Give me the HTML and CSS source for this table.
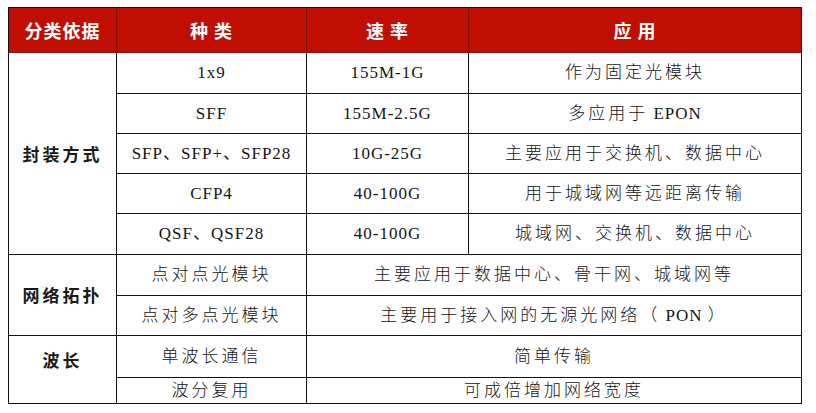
FILE: index.html
```html
<!DOCTYPE html>
<html lang="zh">
<head>
<meta charset="utf-8">
<link rel="stylesheet" href="styles.css">
</head>
<body>
<table class="grid">
  <colgroup>
    <col class="c1"><col class="c2"><col class="c3"><col class="c4">
  </colgroup>
  <thead>
    <tr class="h">
      <th>分类依据</th>
      <th>种&nbsp;类</th>
      <th>速&nbsp;率</th>
      <th>应&nbsp;用</th>
    </tr>
  </thead>
  <tbody>
    <tr class="r41">
      <td class="cat" rowspan="5">封装方式</td>
      <td class="lat">1x9</td>
      <td class="lat">155M-1G</td>
      <td class="cjk">作为固定光模块</td>
    </tr>
    <tr class="r40">
      <td class="lat">SFF</td>
      <td class="lat">155M-2.5G</td>
      <td class="cjk">多应用于<span class="lat"> EPON</span></td>
    </tr>
    <tr class="r40">
      <td class="lat">SFP、SFP+、SFP28</td>
      <td class="lat">10G-25G</td>
      <td class="cjk">主要应用于交换机、数据中心</td>
    </tr>
    <tr class="r40">
      <td class="lat">CFP4</td>
      <td class="lat">40-100G</td>
      <td class="cjk">用于城域网等远距离传输</td>
    </tr>
    <tr class="r41">
      <td class="lat">QSF、QSF28</td>
      <td class="lat">40-100G</td>
      <td class="cjk">城域网、交换机、数据中心</td>
    </tr>
    <tr class="r41">
      <td class="cat" rowspan="2">网络拓扑</td>
      <td class="cjk">点对点光模块</td>
      <td class="cjk" colspan="2">主要应用于数据中心、骨干网、城域网等</td>
    </tr>
    <tr class="r40">
      <td class="cjk">点对多点光模块</td>
      <td class="cjk" colspan="2">主要用于接入网的无源光网络（<span class="lat"> PON </span>）</td>
    </tr>
    <tr class="r42">
      <td class="cat up" rowspan="2">波长</td>
      <td class="cjk">单波长通信</td>
      <td class="cjk" colspan="2">简单传输</td>
    </tr>
    <tr class="r26">
      <td class="cjk">波分复用</td>
      <td class="cjk" colspan="2">可成倍增加网络宽度</td>
    </tr>
  </tbody>
</table>
</body>
</html>
```

FILE: styles.css
```css
html, body {
  margin: 0;
  padding: 0;
  background: #ffffff;
}
body {
  padding: 7px 8px 0 8px;
}
.grid {
  border-collapse: collapse;
  table-layout: fixed;
  width: 793px;
  font-family: "Liberation Serif", "Noto Sans CJK SC", serif;
  color: #141414;
}
.c1 { width: 108px; }
.c2 { width: 190px; }
.c3 { width: 162px; }
.c4 { width: 333px; }

.grid th,
.grid td {
  border: 1px solid #111111;
  padding: 0;
  text-align: center;
  vertical-align: middle;
  white-space: nowrap;
  line-height: 18px;
}
.grid th {
  background: #c00f02;
  color: #ffffff;
  font-family: "Noto Sans CJK SC", sans-serif;
  font-weight: 700;
  font-size: 18px;
  letter-spacing: 1px;
  border-color: #7a1208;
  border-top-color: #111111;
}
.grid th:first-child { border-left-color: #111111; }
.grid th:last-child { border-right-color: #111111; }
.h { height: 45px; }
.r40 { height: 40px; }
.r41 { height: 41px; }
.r42 { height: 42px; }
.r26 { height: 26px; }

.grid td {
  font-size: 17px;
}
.grid td.cjk {
  letter-spacing: 3px;
  font-weight: 300;
}
.grid td.lat,
.grid td .lat {
  letter-spacing: 1px;
}
.grid td.cat {
  font-family: "Noto Sans CJK SC", sans-serif;
  font-weight: 700;
  font-size: 17px;
  letter-spacing: 3px;
  color: #1a1a1a;
}
.grid td.up {
  padding-bottom: 20px;
}
```
